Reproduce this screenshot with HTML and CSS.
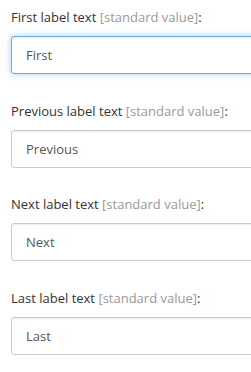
FILE: index.html
```html
<!DOCTYPE html>
<html>
<head>
<meta charset="utf-8">
<link rel="stylesheet" href="styles.css">
</head>
<body>
<div class="form">
  <div class="group">
    <label class="label">First label text <span class="hint">[standard value]</span>:</label>
    <input class="field field-focus" type="text" value="First">
  </div>
  <div class="group">
    <label class="label">Previous label text <span class="hint">[standard value]</span>:</label>
    <input class="field" type="text" value="Previous">
  </div>
  <div class="group">
    <label class="label">Next label text <span class="hint">[standard value]</span>:</label>
    <input class="field" type="text" value="Next">
  </div>
  <div class="group">
    <label class="label">Last label text <span class="hint">[standard value]</span>:</label>
    <input class="field" type="text" value="Last">
  </div>
</div>
</body>
</html>
```
FILE: styles.css
```css
html, body {
  margin: 0;
  padding: 0;
  background: #fff;
  overflow: hidden;
}
body {
  font-family: "Open Sans", "DejaVu Sans", sans-serif;
  color: #333;
}
.form {
  display: flex;
  flex-direction: column;
  gap: 26.6px;
  padding: 7px 0 0 11px;
}
.group {
  display: flex;
  flex-direction: column;
  gap: 9px;
}
.label {
  display: block;
  font-size: 13px;
  line-height: 20px;
  color: #333;
}
.hint {
  color: #999;
}
.field {
  box-sizing: border-box;
  width: 262px;
  height: 38px;
  margin: 0;
  padding: 0 14px;
  font-family: "Open Sans", "DejaVu Sans", sans-serif;
  font-size: 13px;
  color: #555;
  background: #fff;
  border: 1px solid #ccc;
  border-radius: 3px;
  box-shadow: inset 0 1px 1px rgba(0,0,0,0.075);
  outline: none;
}
.field-focus {
  border-color: #66afe9;
  box-shadow: inset 0 1px 1px rgba(0,0,0,0.075), 0 0 6px rgba(102,175,233,0.6);
}
```
